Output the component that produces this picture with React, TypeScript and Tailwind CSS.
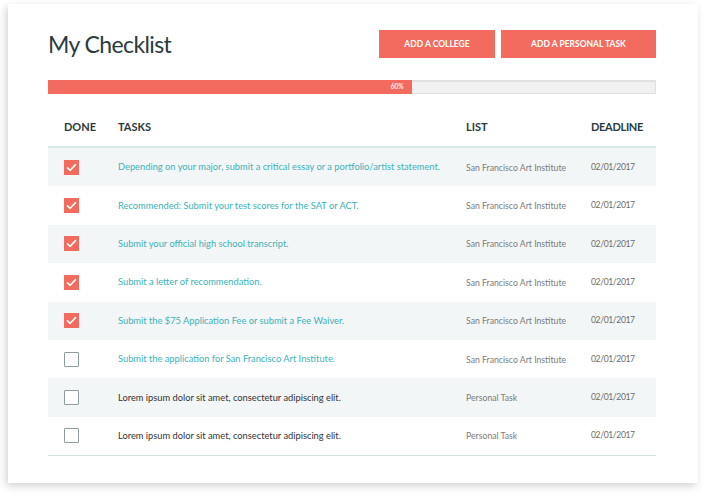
import React from "react";

type Task = {
  title: string;
  list: string;
  deadline: string;
  done: boolean;
  college: boolean;
};

const tasks: Task[] = [
  {
    title:
      "Depending on your major, submit a critical essay or a portfolio/artist statement.",
    list: "San Francisco Art Institute",
    deadline: "02/01/2017",
    done: true,
    college: true,
  },
  {
    title: "Recommended: Submit your test scores for the SAT or ACT.",
    list: "San Francisco Art Institute",
    deadline: "02/01/2017",
    done: true,
    college: true,
  },
  {
    title: "Submit your official high school transcript.",
    list: "San Francisco Art Institute",
    deadline: "02/01/2017",
    done: true,
    college: true,
  },
  {
    title: "Submit a letter of recommendation.",
    list: "San Francisco Art Institute",
    deadline: "02/01/2017",
    done: true,
    college: true,
  },
  {
    title: "Submit the $75 Application Fee or submit a Fee Waiver.",
    list: "San Francisco Art Institute",
    deadline: "02/01/2017",
    done: true,
    college: true,
  },
  {
    title: "Submit the application for San Francisco Art Institute.",
    list: "San Francisco Art Institute",
    deadline: "02/01/2017",
    done: false,
    college: true,
  },
  {
    title: "Lorem ipsum dolor sit amet, consectetur adipiscing elit.",
    list: "Personal Task",
    deadline: "02/01/2017",
    done: false,
    college: false,
  },
  {
    title: "Lorem ipsum dolor sit amet, consectetur adipiscing elit.",
    list: "Personal Task",
    deadline: "02/01/2017",
    done: false,
    college: false,
  },
];

const Checkbox = ({ checked }: { checked: boolean }) =>
  checked ? (
    <span className="w-[15px] h-[15px] bg-[#f36b5e] flex items-center justify-center">
      <svg width="11" height="11" viewBox="0 0 11 11" fill="none">
        <path
          d="M1.5 5.8 L4.2 8.3 L9.5 2.6"
          stroke="white"
          strokeWidth="1.6"
          strokeLinecap="round"
          strokeLinejoin="round"
        />
      </svg>
    </span>
  ) : (
    <span className="w-[15px] h-[15px] bg-white border-[1.5px] border-[#8d9c9e] rounded-[1px]" />
  );

export default function App() {
  const progress = 60;
  return (
    <div className="w-[706px] h-[496px] bg-white pt-1 pl-2 font-['Lato',sans-serif]">
      <div className="w-[690px] h-[479px] bg-white shadow-[-2px_3px_8px_rgba(0,0,0,0.18)] pl-10 pr-[42px] pt-[26px]">
        <header className="flex items-center justify-between h-7">
          <h1 className="text-[23px] tracking-[-0.6px] text-[#2b3a3d] leading-none mt-[1px]">
            My Checklist
          </h1>
          <div className="flex gap-[6px]">
            <button className="w-[116px] h-7 bg-[#f36b5e] text-white text-[8.5px] font-bold">
              ADD A COLLEGE
            </button>
            <button className="w-[155px] h-7 bg-[#f36b5e] text-white text-[8.5px] font-bold">
              ADD A PERSONAL TASK
            </button>
          </div>
        </header>

        <div className="mt-[22px] h-[14px] bg-[#f1f1f1] border border-[#e0e0e0] border-t-2 flex">
          <div
            className="-mt-[2px] -ml-px h-[14px] bg-[#f36b5e] flex items-center justify-end pr-2"
            style={{ width: `${progress}%` }}
          >
            <span className="text-[6.5px] text-white/90 font-bold">
              {progress}%
            </span>
          </div>
        </div>

        <section className="mt-[14px]">
          <div className="h-[40px] flex items-center border-b-2 border-[#d8e8e9] text-[11px] font-bold text-[#2b3a3d]">
            <span className="w-[70px] pl-4">DONE</span>
            <span className="w-[348px]">TASKS</span>
            <span className="w-[125px]">LIST</span>
            <span className="tracking-[-0.3px]">DEADLINE</span>
          </div>
          {tasks.map((t, i) => (
            <div
              key={i}
              className={
                "h-[38.4px] flex items-center text-[9.3px] " +
                (i % 2 === 0 ? "bg-[#f3f6f6]" : "bg-white")
              }
            >
              <span className="w-[70px] pl-4 flex">
                <Checkbox checked={t.done} />
              </span>
              <span
                className={
                  "w-[348px] " +
                  (t.college ? "text-[#3bb2bb]" : "text-[#333]")
                }
              >
                {t.title}
              </span>
              <span className="w-[125px] text-[8.7px] text-[#7b7b7b]">
                {t.list}
              </span>
              <span className="text-[8.6px] tracking-[-0.4px] text-[#6b6b6b]">
                {t.deadline}
              </span>
            </div>
          ))}
          <div className="h-px bg-[#cfe2e3]" />
        </section>
      </div>
    </div>
  );
}
